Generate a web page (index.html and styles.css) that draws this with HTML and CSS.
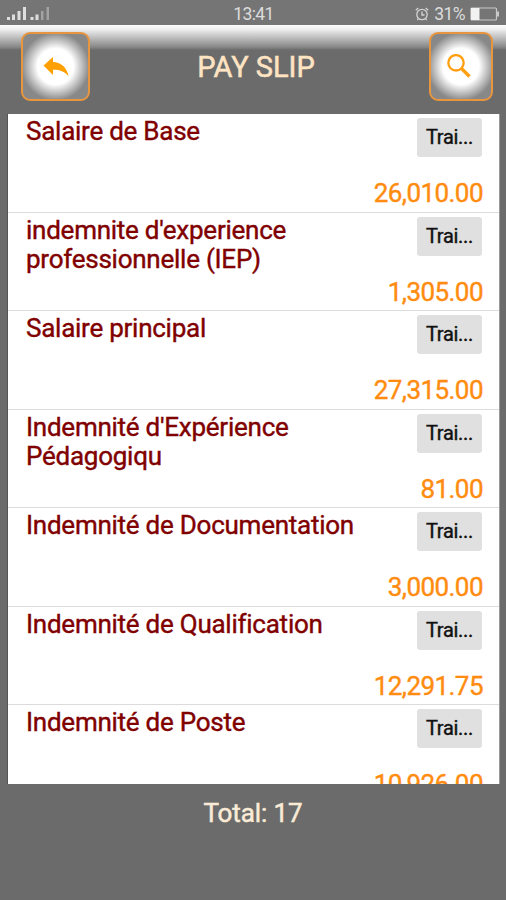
FILE: index.html
```
<!DOCTYPE html>
<html lang="fr">
<head>
    <meta charset="UTF-8">
    <title>Pay Slip</title>
    <link rel="stylesheet" href="styles.css">
</head>
<body>
<div class="screen">
    <div class="status">
        <svg class="signal" width="44" height="16" viewBox="0 0 44 16">
            <g fill="#dedede">
                <rect x="0" y="11" width="3" height="3"/>
                <rect x="5" y="8.500" width="3" height="5.500"/>
                <rect x="10.500" y="5" width="3" height="9"/>
                <rect x="16" y="1" width="3" height="13"/>
                <rect x="23.500" y="11" width="3" height="3"/>
                <rect x="28.500" y="8.500" width="3" height="5.500"/>
            </g>
            <g fill="#a2a2a2">
                <rect x="34" y="5" width="2.500" height="9"/>
                <rect x="39.500" y="1" width="2.500" height="13"/>
            </g>
        </svg>
        <span class="clock">13:41</span>
        <div class="power">
            <svg width="14" height="14" viewBox="0 0 14 14" fill="none" stroke="#d4d4d4" stroke-width="1.300">
                <circle cx="7" cy="7.500" r="5.200"/>
                <path d="M7 4.500v3.500h2.500M0.800 3.200L3.300 1M13.200 3.200L10.700 1M3.500 11.500L2.300 13.200M10.500 11.500L11.700 13.200"/>
            </svg>
            <span class="percent">31%</span>
            <svg width="30" height="14" viewBox="0 0 30 14">
                <rect x="1" y="1" width="25.500" height="12" rx="1" fill="none" stroke="#c9c9c9" stroke-width="1.200"/>
                <rect x="1" y="1" width="8.500" height="12" fill="#f2f2f2"/>
                <rect x="27" y="4.500" width="2" height="5" fill="#c9c9c9"/>
            </svg>
        </div>
    </div>
    <div class="header">
        <a href="#" class="btn back">
            <svg width="26" height="20" viewBox="0 0 26 20">
                <path fill="#ffa000" d="M0.500 8.500L10 0V4.900C17.500 5.300 24 10 25.500 19C21 14 16 12.500 10 12.700V18Z"/>
            </svg>
        </a>
        <h1>PAY SLIP</h1>
        <a href="#" class="btn search">
            <svg width="24" height="24" viewBox="0 0 24 24" fill="none" stroke="#ff9f10">
                <circle cx="9" cy="8.800" r="7.700" stroke-width="2.300"/>
                <path d="M14.500 14.500L22.500 22.500" stroke-width="3.200"/>
            </svg>
        </a>
    </div>
    <ul class="list">
        <li><p class="name">Salaire de Base</p><div class="side"><span class="tag">Trai...</span><span class="amount">26,010.00</span></div></li>
        <li><p class="name">indemnite d'experience professionnelle (IEP)</p><div class="side"><span class="tag">Trai...</span><span class="amount">1,305.00</span></div></li>
        <li><p class="name">Salaire principal</p><div class="side"><span class="tag">Trai...</span><span class="amount">27,315.00</span></div></li>
        <li><p class="name">Indemnité d'Expérience Pédagogiqu</p><div class="side"><span class="tag">Trai...</span><span class="amount">81.00</span></div></li>
        <li><p class="name">Indemnité de Documentation</p><div class="side"><span class="tag">Trai...</span><span class="amount">3,000.00</span></div></li>
        <li><p class="name">Indemnité de Qualification</p><div class="side"><span class="tag">Trai...</span><span class="amount">12,291.75</span></div></li>
        <li><p class="name">Indemnité de Poste</p><div class="side"><span class="tag">Trai...</span><span class="amount">10,926.00</span></div></li>
    </ul>
    <div class="total">Total: 17</div>
</div>
</body>
</html>
```

FILE: styles.css
```
* {
    margin: 0;
    padding: 0;
    box-sizing: border-box;
}

body {
    font-family: Roboto, "Liberation Sans", sans-serif;
    background-color: #6b6b6b;
}

.screen {
    height: 900px;
    overflow: hidden;
}

.status {
    display: grid;
    grid-template-columns: 1fr auto 1fr;
    align-items: center;
    height: 25px;
    padding: 2px 6px 0 7px;
    background-color: #757575;
    color: #dcdcdc;
    font-size: 17.5px;
}

.clock {
    letter-spacing: -0.6px;
}

.power {
    display: flex;
    align-items: center;
    justify-content: flex-end;
    gap: 5px;
}

.percent {
    letter-spacing: -0.6px;
}

.header {
    display: flex;
    justify-content: space-between;
    height: 89px;
    padding: 7px 13px 0 21px;
    background: linear-gradient(#fafafa 0, #f0f0f0 4px, #888 22px, #6b6b6b 25px);
}

.header h1 {
    padding: 20px 7px 0 0;
    line-height: 30px;
    font-size: 29px;
    font-weight: 400;
    color: #ffe4c4;
    -webkit-text-stroke: 0.5px #ffe4c4;
}

.btn {
    display: flex;
    align-items: center;
    justify-content: center;
    height: 69px;
    border: 2px solid #e89540;
    border-radius: 9px;
    background: radial-gradient(circle, #fff 0, #fff 18px, #888 34px);
}

.back {
    width: 69px;
}

.search {
    width: 64px;
    padding: 0 4px 2px 0;
}

.list {
    height: 670px;
    margin: 0 6px 0 7px;
    overflow: hidden;
    list-style: none;
    background-color: #fff;
    border-left: 1px solid #555;
    border-right: 1px solid #999;
}

.list li {
    display: flex;
    justify-content: space-between;
    height: 98.5px;
    padding: 3px 16px 0 18px;
    border-bottom: 1px solid #dcdcdc;
}

.name {
    width: 350px;
    line-height: 29.5px;
    font-size: 26px;
    letter-spacing: -0.25px;
    color: #800000;
    -webkit-text-stroke: 0.4px #800000;
}

.side {
    display: flex;
    flex-direction: column;
    align-items: flex-end;
}

.tag {
    width: 65px;
    height: 39px;
    margin: 1px 1px 0 0;
    border-radius: 3px;
    background-color: #e0e0e0;
    line-height: 39px;
    text-align: center;
    font-size: 20px;
    letter-spacing: -0.3px;
    color: #111;
    -webkit-text-stroke: 0.4px #111;
}

.amount {
    margin-top: 21px;
    line-height: 30px;
    font-size: 26px;
    letter-spacing: -0.55px;
    color: #ff8c10;
    -webkit-text-stroke: 0.4px #ff8c10;
}

.total {
    padding-top: 14px;
    text-align: center;
    line-height: 30px;
    font-size: 26px;
    font-weight: 400;
    letter-spacing: -0.1px;
    color: #faebd7;
    -webkit-text-stroke: 0.5px #faebd7;
}
```
